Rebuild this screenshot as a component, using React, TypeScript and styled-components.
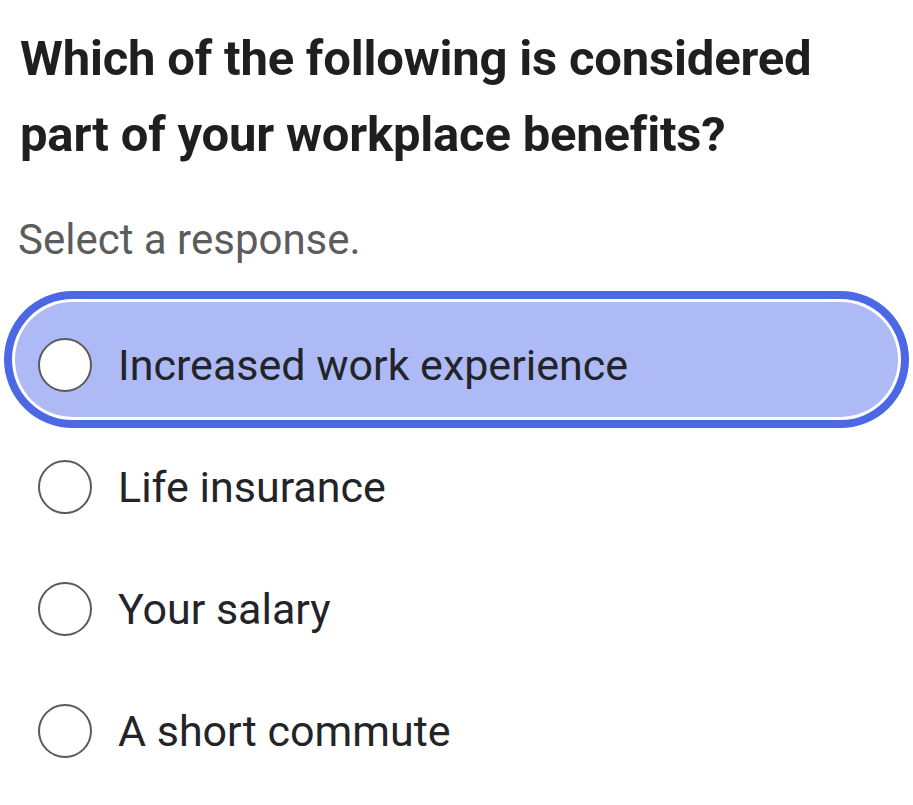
import styled, { createGlobalStyle } from 'styled-components';

const GlobalStyle = createGlobalStyle`
    html, body {
        margin: 0;
        padding: 0;
        background: #ffffff;
    }
    body {
        font-family: Roboto, "Liberation Sans", sans-serif;
        font-variant-ligatures: none;
        color: #1f1f1f;
    }
`;

const options = [
    'Increased work experience',
    'Life insurance',
    'Your salary',
    'A short commute',
];

interface OptionProps {
    $selected?: boolean;
}

const App = () => {
    const selected = 0;
    return (
        <>
            <GlobalStyle />
            <Page>
                <Question>
                    Which of the following is considered
                    <br />
                    part of your workplace benefits?
                </Question>
                <Hint>Select a response.</Hint>
                <OptionList>
                    {options.map((label, i) => (
                        <Option key={label} $selected={i === selected}>
                            <Radio />
                            <Label>{label}</Label>
                        </Option>
                    ))}
                </OptionList>
            </Page>
        </>
    );
};

const Page = styled.div`
    display: flex;
    flex-direction: column;
    width: 913px;
    min-height: 805px;
    box-sizing: border-box;
    padding: 21px 0 0;
`;

const Question = styled.h1`
    margin: 0 0 0 20px;
    font-size: 49px;
    line-height: 76px;
    font-weight: 700;
    letter-spacing: -0.2px;
    color: #1f1f1f;
`;

const Hint = styled.div`
    margin: 37px 0 0 18px;
    font-size: 42px;
    line-height: 60px;
    color: #5c5c5c;
`;

const OptionList = styled.div`
    display: flex;
    flex-direction: column;
    gap: 7px;
    margin: 32px 15px 0;
`;

const Option = styled.div<OptionProps>`
    display: flex;
    align-items: center;
    gap: 26px;
    height: 115px;
    box-sizing: border-box;
    padding: 10px 23px 0;
    border-radius: 999px;
    background: ${(p) => (p.$selected ? '#aebaf6' : 'transparent')};
    box-shadow: ${(p) =>
        p.$selected ? '0 0 0 3px #ffffff, 0 0 0 11px #4c68e4' : 'none'};
`;

const Radio = styled.span`
    flex: none;
    width: 54px;
    height: 54px;
    box-sizing: border-box;
    border-radius: 50%;
    border: 2px solid #5a5a5a;
    background: #ffffff;
`;

const Label = styled.span`
    font-size: 43px;
    line-height: 54px;
    color: #222428;
`;

export default App;
